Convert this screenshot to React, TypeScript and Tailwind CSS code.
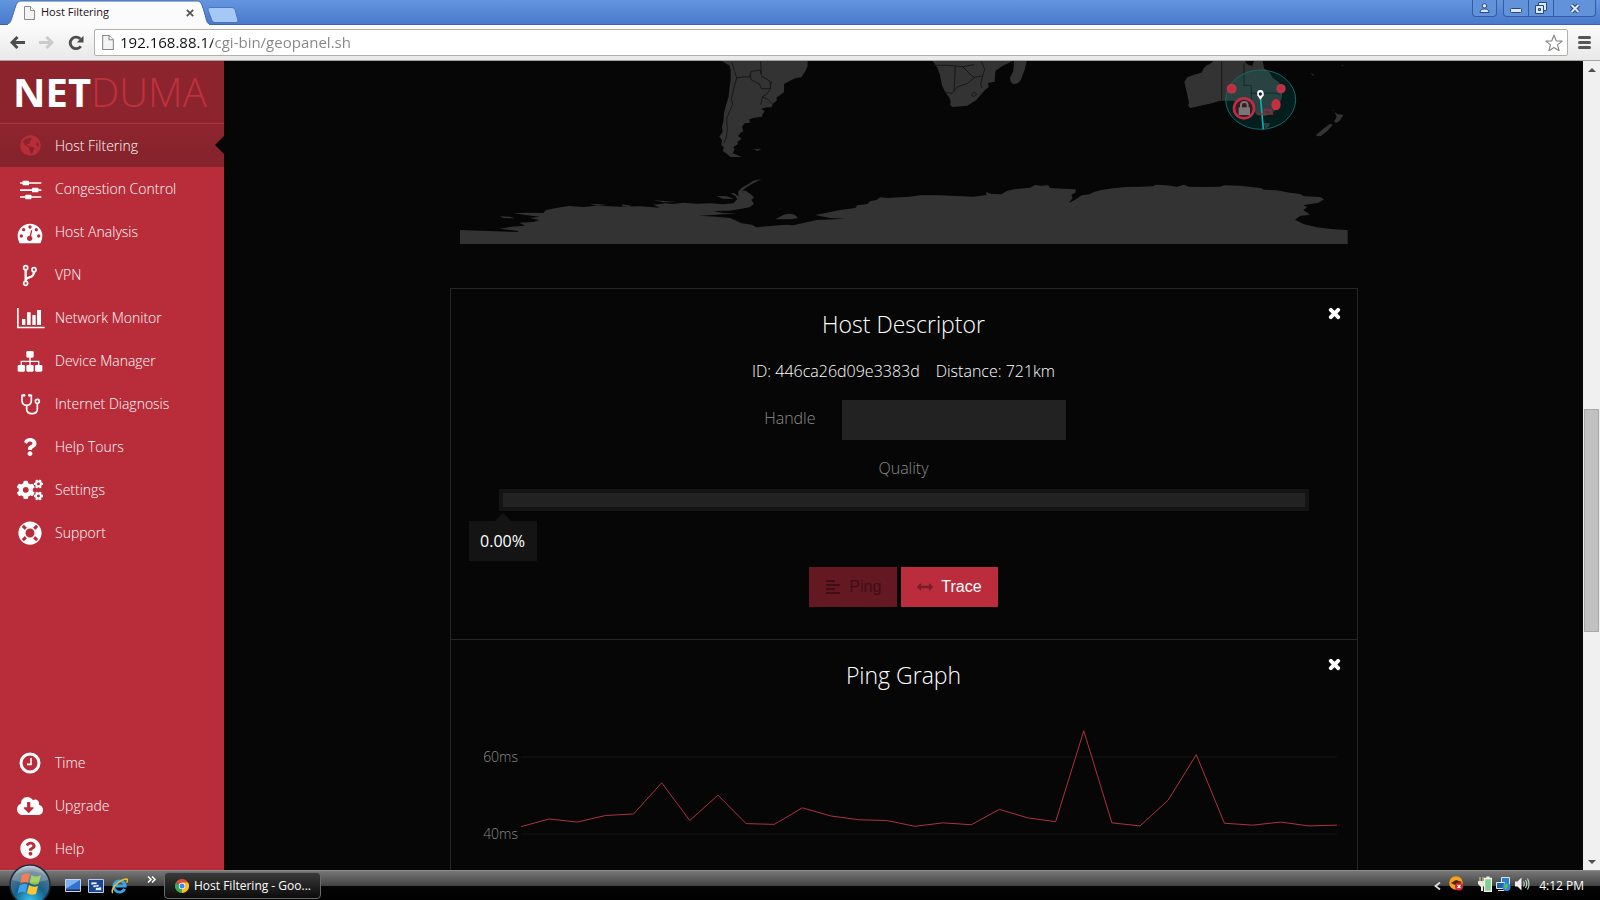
import React, { useState } from 'react';
import { FaAlignLeft, FaArrowsAltH, FaCloudDownloadAlt, FaCogs, FaGlobeAmericas, FaLifeRing, FaQuestion, FaQuestionCircle, FaTimes } from 'react-icons/fa';

const PINGS = [
  41.9, 43.9, 43.1, 44.8, 45.2, 53.3, 43.5, 50.1, 42.7, 42.5,
  46.8, 44.7, 43.7, 43.5, 42, 42.9, 42.4, 46.4, 44.2, 43.2,
  66.8, 42.9, 42.1, 48.8, 60.6, 42.8, 42.3, 43.1, 42.1, 42.3,
];

// All hand-drawn menu icons share one 28x26 box
const Glyph = ({ children }: { children: React.ReactNode }) => (
  <svg viewBox="0 0 84 78" className="h-[26px] w-7 overflow-visible" fill="currentColor" aria-hidden="true">{children}</svg>
);

const SlidersIcon = () => (
  <Glyph>
    <path d="M12 19h64v4H12zM12 40h64v5H12zM12 61h64v4H12z" />
    <rect x="20" y="14" width="19" height="14" rx="2" />
    <rect x="48" y="35" width="19" height="14" rx="2" />
    <rect x="28" y="56" width="18" height="14" rx="2" />
  </Glyph>
);

const DashboardIcon = () => (
  <Glyph>
    <path d="M5 51a37 37 0 0 1 74 0q0 11-5 20-1 2-3 2H13q-2 0-3-2-5-9-5-20Z" />
    <g fill="#b92d3a">
      <circle cx="16" cy="51" r="5" /><circle cx="23" cy="32" r="5" /><circle cx="42" cy="24" r="5" />
      <circle cx="61" cy="32" r="5" /><circle cx="68" cy="51" r="5" /><circle cx="41" cy="58" r="8" />
    </g>
    <path d="M47 34l-5 22" stroke="#b92d3a" strokeWidth="4" />
  </Glyph>
);

const ForkIcon = () => (
  <Glyph>
    <g fill="none" stroke="currentColor" strokeWidth="5">
      <circle cx="29" cy="17" r="6" /><circle cx="29" cy="64" r="6" /><circle cx="54" cy="23" r="6" />
      <path strokeWidth="7" d="M29 23v35M54 29c0 13-8 15-16 18-6 2-9 4-9 9" />
    </g>
  </Glyph>
);

const ChartIcon = () => (
  <Glyph>
    <path d="M3 9h5v56h78v5H3zM18 42h10v18H18zM33 22h11v38H33zM49 30h10v30H49zM63 15h12v45H63z" />
  </Glyph>
);

const SitemapIcon = () => (
  <Glyph>
    <rect x="31" y="9" width="22" height="20" rx="4" />
    <rect x="5" y="51" width="22" height="20" rx="4" />
    <rect x="31" y="51" width="22" height="20" rx="4" />
    <rect x="57" y="51" width="22" height="20" rx="4" />
    <path d="M42 28v24M16 52V40h52v12" fill="none" stroke="currentColor" strokeWidth="4" />
  </Glyph>
);

const StethoscopeIcon = () => (
  <Glyph>
    <g fill="none" stroke="currentColor" strokeWidth="5">
      <path d="M25 13h-7v15c0 9 5 15 14 15s14-6 14-15V13h-7" />
      <path d="M32 43v11c0 9 6 14 16 14s16-5 16-14V37" />
      <circle cx="64" cy="31" r="6" />
    </g>
    <circle cx="24" cy="13" r="4" /><circle cx="40" cy="13" r="4" />
  </Glyph>
);

const ClockIcon = () => (
  <Glyph>
    <g fill="none" stroke="currentColor">
      <circle cx="42" cy="39" r="27" strokeWidth="9" />
      <path d="M45 24v19H33" strokeWidth="5" />
    </g>
  </Glyph>
);

const MENU = [
  { label: 'Host Filtering', icon: <FaGlobeAmericas size={21} /> },
  { label: 'Congestion Control', icon: <SlidersIcon /> },
  { label: 'Host Analysis', icon: <DashboardIcon /> },
  { label: 'VPN', icon: <ForkIcon /> },
  { label: 'Network Monitor', icon: <ChartIcon /> },
  { label: 'Device Manager', icon: <SitemapIcon /> },
  { label: 'Internet Diagnosis', icon: <StethoscopeIcon /> },
  { label: 'Help Tours', icon: <FaQuestion size={18} /> },
  { label: 'Settings', icon: <FaCogs size={26} /> },
  { label: 'Support', icon: <FaLifeRing size={24} /> },
];

const FOOTER_MENU = [
  { label: 'Time', icon: <ClockIcon /> },
  { label: 'Upgrade', icon: <FaCloudDownloadAlt size={26} /> },
  { label: 'Help', icon: <FaQuestionCircle size={21} /> },
];

function PageIcon({ className }: { className: string }) {
  return (
    <svg viewBox="0 0 11 14" className={className} aria-hidden="true">
      <path d="M.5.5h6l4 4v9H.5z" fill="#f4f4f4" stroke="#8a8a8a" />
      <path d="M6.500.5v4h4" fill="#fff" stroke="#8a8a8a" />
    </svg>
  );
}

function MenuItem({ label, icon, active }: { label: string; icon: React.ReactNode; active?: boolean }) {
  return (
    <li className={active ? "relative bg-linear-to-b from-[#8f252e] to-[#84222b]" : ""}>
      <a href="#" className="flex h-[43px] items-center gap-[11px] pl-4 text-sm font-light text-white">
        <span className={`flex w-7 justify-center ${active ? "text-[#b92d3a]" : ""}`}>{icon}</span>
        {label}
      </a>
      {active && (
        <svg viewBox="0 0 9 18" className="absolute right-0 top-3 h-[18px] w-[9px]" aria-hidden="true">
          <path d="M9 0v18L0 9z" fill="#060606" />
        </svg>
      )}
    </li>
  );
}

function BrowserChrome() {
  return (
    <header className="shrink-0">
      <div className="flex h-[25px] items-start justify-between border-b border-[#3c63ad] bg-linear-to-b from-[#6496df] to-[#4a79cd] pl-1.5">
        <div className="flex">
          <div className="relative h-[25px] w-[205px]">
            <svg viewBox="0 0 205 25" className="absolute inset-0 h-full w-full" aria-hidden="true">
              <path d="M0 25C5 24 5 20 9 8c2-6 3-7 7-7h174c4 0 5 1 7 7 4 12 3 16 8 17z" fill="#fbfbfb" stroke="#3f67b0" />
              <path d="M2 24h201v1H2z" fill="#fbfbfb" />
            </svg>
            <div className="relative flex h-[25px] items-center pl-[18px] pr-4">
              <PageIcon className="h-[14px] w-[11px]" />
              <span className="ml-[6px] flex-1 text-[11px] text-[#1c1020]">Host Filtering</span>
              <button aria-label="Close tab" className="p-px text-[#555]">
                <svg viewBox="0 0 8 8" className="h-2 w-2" stroke="currentColor" strokeWidth="1.800"><path d="M.8.8l6.400 6.400M7.200.8L.8 7.200" /></svg>
              </button>
            </div>
          </div>
          <button aria-label="New tab" className="-ml-1 mt-[5px]">
            <svg viewBox="0 0 32 16" className="h-4 w-8"><path d="M3 .5h22q2 0 3 2l3 11q0 2-2 2H8q-2 0-3-2L1 3Q.500.5 3 .5z" fill="#a6c8f6" stroke="#4a76bf" /></svg>
          </button>
        </div>
        <div className="flex gap-1.5 pr-1">
          <button aria-label="User" className="flex h-[17px] w-[25px] items-center justify-center rounded-b border border-t-0 border-[#355c9f] bg-[#6292da]">
            <svg viewBox="0 0 11 10" className="h-[10px] w-[11px]" fill="#dce9fa" stroke="#27477f"><circle cx="5.500" cy="2.800" r="2.200" /><path d="M1 9.500q0-3.500 4.500-3.500T10 9.500z" /></svg>
          </button>
          <div className="flex h-[17px] divide-x divide-[#355c9f] overflow-hidden rounded-b border border-t-0 border-[#355c9f] bg-[#6292da]">
            <button aria-label="Minimize" className="flex w-[25px] items-center justify-center pt-1">
              <svg viewBox="0 0 12 5" className="h-[5px] w-3"><rect x=".5" y=".5" width="11" height="4" rx="1" fill="#dce9fa" stroke="#27477f" /></svg>
            </button>
            <button aria-label="Restore" className="flex w-[25px] items-center justify-center">
              <svg viewBox="0 0 12 12" className="h-3 w-3" fill="#dce9fa" stroke="#27477f"><path d="M3.500.5h8v8h-8z" /><path d="M.5 3.500h8v8h-8z" /><path d="M3.500 6.500h2v2h-2z" fill="#6292da" /></svg>
            </button>
            <button aria-label="Close" className="flex w-[41px] items-center justify-center">
              <svg viewBox="0 0 12 11" className="h-[11px] w-3"><path d="M2.500 2l7 7M9.500 2l-7 7" stroke="#27477f" strokeWidth="4" /><path d="M2.500 2l7 7M9.500 2l-7 7" stroke="#dce9fa" strokeWidth="2" /></svg>
            </button>
          </div>
        </div>
      </div>
      <div className="flex h-9 items-center border-b border-[#a3a3a3] bg-linear-to-b from-[#fbfbfb] to-[#e9e9e9] pl-2.5 pr-[9px]">
        <button aria-label="Back" className="text-[#4d4d4d]">
          <svg viewBox="0 0 15 13" className="h-[13px] w-[15px]" fill="none" stroke="currentColor" strokeWidth="3"><path d="M15 6.500H2.500M7.500 1L2 6.500 7.500 12" /></svg>
        </button>
        <button aria-label="Forward" className="ml-[14px] text-[#cbcbcb]">
          <svg viewBox="0 0 15 13" className="h-[13px] w-[15px]" fill="none" stroke="currentColor" strokeWidth="3"><path d="M0 6.500h12.500M7.500 1L13 6.500 7.500 12" /></svg>
        </button>
        <button aria-label="Reload" className="ml-[14px] text-[#4d4d4d]">
          <svg viewBox="0 0 16 16" className="h-4 w-4"><path d="M12.800 11.200A5.800 5.800 0 1 1 12.300 4" fill="none" stroke="currentColor" strokeWidth="2.800" /><path d="M15.500.8v6.700H8.800z" fill="currentColor" /></svg>
        </button>
        <div className="ml-2.5 flex h-[27px] flex-1 items-center rounded-xs border border-[#b4b0a8] bg-white pl-[7px] pr-1">
          <PageIcon className="h-[15px] w-3" />
          <input
            type="text"
            aria-label="Address"
            defaultValue="192.168.88.1/cgi-bin/geopanel.sh"
            className="ml-1.5 flex-1 bg-[linear-gradient(90deg,#111_93px,#858585_93px)] bg-clip-text text-[15px] text-transparent outline-none"
          />
          <button aria-label="Bookmark">
            <svg viewBox="0 0 18 18" className="h-[18px] w-[18px]"><path d="M9 1.200l2.200 5.600 6 .300-4.700 3.800 1.600 5.800L9 13.400l-5.100 3.300 1.600-5.800L.8 7.100l6-.3z" fill="#fff" stroke="#8a8a8a" strokeWidth="1.200" strokeLinejoin="round" /></svg>
          </button>
        </div>
        <button aria-label="Menu" className="ml-2.5 flex w-[13px] flex-col gap-0.5">
          <span className="h-[3px] rounded-sm bg-[#555]" />
          <span className="h-[3px] rounded-sm bg-[#555]" />
          <span className="h-[3px] rounded-sm bg-[#555]" />
        </button>
      </div>
    </header>
  );
}

function Sidebar() {
  return (
    <nav className="flex w-56 shrink-0 flex-col justify-between bg-[#b92d3a]">
      <div>
        <div className="flex h-[63px] items-center border-b border-[#a83540] bg-[#8b242d] pl-[13px] text-[40px] leading-none text-white">
          <span className="font-bold">NET</span>
          <span className="font-light text-[#c0313f]">DUMA</span>
        </div>
        <ul>
          {MENU.map((item, i) => <MenuItem key={item.label} {...item} active={i === 0} />)}
        </ul>
      </div>
      <ul>
        {FOOTER_MENU.map(item => <MenuItem key={item.label} {...item} />)}
      </ul>
    </nav>
  );
}

function WorldMap() {
  return (
    <svg viewBox="60 3 2664 549" className="mx-auto block w-full max-w-[888px]" role="img" aria-label="Host map">
      <g fill="#333">
        {/* South America */}
        <path d="M846 3L860 12L868 16L872 30L872 60L868 85L866 110L858 135L852 160L850 185L846 200L848 215L838 230L846 240L844 256L852 262L848 272L858 280L872 291L905 291L890 284L878 280L884 268L880 262L894 252L892 246L905 236L894 228L902 218L910 214L906 200L914 190L930 188L928 178L940 174L966 170L968 162L974 154L964 146L980 142L994 142L1000 130L1010 122L1010 112L1022 104L1032 96L1032 72L1050 62L1068 54L1084 52L1096 34L1103 18L1103 3Z" />
        {/* Antarctica */}
        <path d="M60 510L120 512L232 516L235 513L180 506L215 500L255 497L238 488L280 486L298 480L270 474L300 470L262 466L220 460L262 458L310 459L318 450L345 445L385 438L430 441L470 437L540 440L600 439L660 443L640 434L676 430L700 432L730 428L770 431L810 430L850 433L880 430L892 418L886 408L870 400L884 400L896 410L894 396L904 384L925 372L940 362L965 357L940 370L922 380L906 392L918 392L934 404L942 412L934 420L942 432L928 442L905 446L868 452L820 453L850 459L890 460L830 464L775 467L830 470L870 474L905 490L935 494L950 502L1000 497L1040 494L1060 496L1090 489L1130 480L1215 476L1170 474L1125 465L1160 458L1200 450L1246 444L1252 436L1282 432L1290 424L1310 420L1320 412L1345 414L1380 412L1410 410L1440 406L1500 406L1550 408L1600 410L1640 405L1638 396L1655 402L1684 403L1700 393L1725 387L1770 383L1785 375L1802 377L1825 376L1830 384L1870 386L1908 388L1906 398L1894 404L1898 414L1886 429L1904 420L1925 406L1948 403L1962 396L1984 390L2020 385L2060 381L2100 380L2140 379L2146 374L2180 376L2210 380L2232 374L2246 380L2290 381L2340 380L2352 376L2400 377L2440 382L2462 384L2472 389L2510 391L2550 398L2580 402L2592 409L2640 411L2652 418L2636 428L2590 436L2602 442L2590 450L2610 464L2580 468L2565 479L2590 492L2630 502L2680 508L2723 510L2723 552L60 552Z" />
        <path d="M1006 478l22-12q16-8 36-2l10 10-20 4zM180 469l30 1 14 5-34-1zM942 267l22 1-12 5zM450 431l30 2 22 2-30 2zM830 408l30 1 22 8-34-1zM640 420l40 4 30 2-40 1zM545 433l30 4-8 4-18-2z" />
        {/* Africa */}
        <path d="M1478 3l14 20 8 22 6 32 12 22 10 14 4 12-2 10 8 6 44-4 26-16 26-30 12-10-2-12 20-4 2-32 20-14 20-10 12-6zM1722 3h38l-6 26-12 32-8 9-14 3-8-8-2-12 10-20z" />
        {/* Australia and New Zealand */}
        <path d="M2233 65L2242 52L2262 44L2284 38L2292 24L2300 16L2310 12L2320 3L2416 3L2420 12L2436 18L2442 3L2468 3L2472 25L2490 38L2498 54L2516 66L2526 85L2526 110L2516 140L2498 158L2476 168L2450 165L2442 150L2426 140L2410 132L2398 124L2372 122L2340 122L2316 130L2288 136L2266 141L2250 144L2244 136L2247 128L2240 95Z" />
        <path d="M2470 190l20-1-4 12-10 4zM2628 225l24-20 18-14 8 4-16 18-20 16-12-1zM2682 184l8-12-6-16 8 6 18 4-12 18-10 5zM2610 38l14 7-4 2zM2704 15h6l-2 4zM2676 148l6 4-2 2z" />
      </g>
      <g fill="none" stroke="#171717" strokeWidth="3" strokeLinejoin="round">
        <path d="M876 8l8 26 6 20-6 22-10 40 4 18-10 22-8 20 2 34-4 24-6 16M890 54l26-4 12 2 6-18 26-4 4 14-2-40M930 44l4 16 24 12 6 14h26l4-20-30-18M990 66l2 20-12 16-12 8-6 24M966 110l18 8 16 18" />
        <path d="M1480 16h40l26 2 22 2 34-6M1546 20l-4 74-6 6-22-4M1568 20l24 24 12 8-22 18-32 12-8 12M1604 52l24-4 6-20-10-24M1628 48l-6 24 4 12M1594 104l8-8 8 6-8 8z" />
        <path d="M2345 3v118M2412 10v70M2412 76h22v74M2434 100l66-1 20 4" />
      </g>
      <ellipse cx="2462" cy="119" rx="105" ry="89" fill="#008c8c" fillOpacity=".18" stroke="#16686a" strokeWidth="3" />
      <path d="M2462 118l8 90" stroke="#18a9ae" strokeWidth="5" />
      <g fill="#b3374a">
        <circle cx="2375" cy="86" r="15" /><circle cx="2523" cy="86" r="14" /><ellipse cx="2508" cy="134" rx="14" ry="17" fill="#c5303f" />
      </g>
      <g fill="#d71e35"><circle cx="2375" cy="86" r="6" /><circle cx="2523" cy="86" r="5" /></g>
      <circle cx="2412" cy="145" r="30" fill="#421820" stroke="#b92f45" strokeWidth="8" />
      <path d="M2396 142h34v23h-34z" fill="#777" />
      <path d="M2403 144v-8q0-10 10-10t10 10v8" fill="none" stroke="#777" strokeWidth="6" />
      <path d="M2455 162h18v-12h20v14M2470 162h30M2474 145l24 14" fill="none" stroke="#8b2b3a" strokeWidth="4" />
      <path d="M2461 120l-9-14q-3-16 9-16t10 16z" fill="#fff" />
      <circle cx="2461" cy="102" r="5" fill="#123" />
    </svg>
  );
}

function PanelHeader({ title }: { title: string }) {
  return (
    <div className="relative pt-[17px]">
      <h2 className="text-center text-[23px] font-light leading-9 text-white">{title}</h2>
      <button aria-label={`Close ${title}`} className="absolute right-[15px] top-[17px] text-white"><FaTimes size={15} strokeWidth={40} stroke="currentColor" /></button>
    </div>
  );
}

function PingGraph() {
  const y = (ms: number) => 124 - (ms - 40) * 3.85;
  const points = PINGS.map((ms, i) => `${70 + (i * 816) / (PINGS.length - 1)},${y(ms)}`).join(' ');

  return (
    <svg viewBox="0 0 906 200" className="block w-full" role="img" aria-label="Ping graph">
      {[60, 40].map(ms => (
        <g key={ms}>
          <path d={`M70 ${y(ms)}H886`} stroke="#151515" />
          <text x="67" y={y(ms) + 5} textAnchor="end" className="fill-[#8b8b8b] text-[14px] font-light">{ms}ms</text>
        </g>
      ))}
      <polyline points={points} fill="none" stroke="#b03040" strokeWidth="1" />
    </svg>
  );
}

function HostDescriptor() {
  const [handle, setHandle] = useState("");

  return (
    <section className="border border-[#262626] pb-8">
      <PanelHeader title="Host Descriptor" />
      <p className="mt-[17px] flex justify-center gap-4 text-base font-light leading-6 text-white">
        <span>ID: 446ca26d09e3383d</span>
        <span>Distance: 721km</span>
      </p>
      <div className="mt-[17px] flex justify-center">
        <label htmlFor="handle" className="w-[100px] pr-[26px] pt-1.5 text-right font-light text-[#8b8b8b]">Handle</label>
        <input id="handle" type="text" value={handle} onChange={e => setHandle(e.target.value)} className="h-10 w-56 bg-[#222] px-3 text-white outline-none" />
      </div>
      <div id="quality-label" className="mt-4 text-center font-light leading-6 text-[#8b8b8b]">Quality</div>
      <div className="relative mx-12 mt-[9px]">
        <div role="meter" aria-labelledby="quality-label" aria-valuenow={0} aria-valuemin={0} aria-valuemax={100} className="h-[22px] border-4 border-[#141414] bg-[#222]" />
        <div className="absolute -left-[30px] top-8 flex h-10 w-[68px] items-center justify-center bg-[#141414] text-base text-white">
          0.00%
          <svg viewBox="0 0 16 8" className="absolute -top-2 h-2 w-4" aria-hidden="true"><path d="M8 0l8 8H0z" fill="#141414" /></svg>
        </div>
      </div>
      <div className="mt-14 flex justify-center gap-1 font-['Liberation_Sans',Arial,sans-serif] text-base">
        <button disabled className="flex h-10 items-center gap-2 bg-[#641822] px-4 text-[#3e0f17]"><FaAlignLeft />Ping</button>
        <button className="flex h-10 items-center gap-2 bg-[#bb2d3c] px-4 text-white"><FaArrowsAltH className="text-[#7c1c28]" />Trace</button>
      </div>
    </section>
  );
}

function Scrollbar() {
  return (
    <div className="flex w-[17px] shrink-0 flex-col bg-[#f0f0f0] px-px" aria-hidden="true">
      <div className="flex h-[17px] items-center justify-center"><svg viewBox="0 0 8 4" className="h-1 w-2"><path d="M4 0l4 4H0z" fill="#505050" /></svg></div>
      <div className="grow-3 basis-0" />
      <div className="grow-2 basis-0 border border-[#a8a8a8] bg-[#c1c1c1]" />
      <div className="grow-2 basis-0" />
      <div className="flex h-[17px] items-center justify-center"><svg viewBox="0 0 8 4" className="h-1 w-2"><path d="M4 4l4-4H0z" fill="#505050" /></svg></div>
    </div>
  );
}

function StartOrb() {
  return (
    <svg viewBox="0 0 42 42" className="absolute -top-[7px] left-0 h-[42px] w-[42px]" aria-hidden="true">
      <defs>
        <radialGradient id="orb" cx=".5" cy=".9" r=".9">
          <stop offset="0" stopColor="#35c6ee" /><stop offset=".45" stopColor="#16618f" /><stop offset=".8" stopColor="#57748a" /><stop offset="1" stopColor="#c3d3dc" />
        </radialGradient>
      </defs>
      <circle cx="21" cy="21" r="20" fill="url(#orb)" stroke="#1c2c38" strokeWidth="1.500" />
      <path d="M13 11q4-3 8-1l-2 9q-4-2-8 1z" fill="#ee5a24" />
      <path d="M22.500 11q4 3 9.500 0l-2.500 9q-5 2-9-1z" fill="#8cc63e" />
      <path d="M10.500 21.500q4-3 8-1l-2 8q-4-2-8 1z" fill="#3fa0e8" />
      <path d="M20 21q4 3 9 1l-2 8q-5 2-9-1z" fill="#fdc82f" />
      <path d="M3 16a18.500 18.500 0 0 1 36 0q-18 5-36 0z" fill="#fff" fillOpacity=".22" />
    </svg>
  );
}

function Taskbar() {
  return (
    <footer className="flex h-[30px] shrink-0 items-center border-t border-[#8c8c8c] bg-[linear-gradient(#777_0,#444_50%,#050505_50%,#000_100%)] text-white">
      <button aria-label="Start" className="relative ml-[9px] h-[30px] w-[42px] self-start"><StartOrb /></button>
      <div className="ml-[14px] flex items-center gap-[7px]">
        <button aria-label="Show desktop">
          <svg viewBox="0 0 16 14" className="h-[14px] w-4"><path d="M.5.5h15v12H.5z" fill="#3470d0" stroke="#c8d4e4" /><path d="M1 1h14L2 9H1z" fill="#7fb0f0" /><path d="M1 10.500h14V12H1z" fill="#1c2a44" /></svg>
        </button>
        <button aria-label="Switch windows">
          <svg viewBox="0 0 16 14" className="h-[14px] w-4"><path d="M.5.5h15v13H.5z" fill="#1c4590" stroke="#b8cce8" /><path d="M3 3h6v3H3zM5 5.500h6v3H5zM7.500 8h6v3.500h-6z" fill="#e8f2ff" stroke="#1c4590" strokeWidth=".7" /></svg>
        </button>
        <button aria-label="Internet Explorer">
          <svg viewBox="0 0 18 18" className="h-[18px] w-[17px]" fill="none"><path d="M14.500 12A6 6 0 1 1 15 9H5" stroke="#3aa5ec" strokeWidth="3" /><path d="M2 16.500C-1 13 8 2 16.500 1.500c1.500.5 1 2.500 0 4" stroke="#f3c21d" strokeWidth="1.600" /></svg>
        </button>
      </div>
      <button aria-label="More" className="mb-3 ml-[19px]">
        <svg viewBox="0 0 9 7" className="h-[7px] w-[9px]" fill="none" stroke="#fff" strokeWidth="1.500"><path d="M1 .5l3 3-3 3M5 .5l3 3-3 3" /></svg>
      </button>
      <button className="ml-2 flex h-[27px] w-[157px] items-center gap-[5px] rounded-sm border border-[#6a6a6a] bg-linear-to-b from-[#3a3a3a] to-[#0c0c0c] pl-2.5 text-xs">
        <svg viewBox="0 0 14 14" className="h-[14px] w-[14px]" aria-hidden="true">
          <path d="M7 7L.9 3.500A7 7 0 0 1 13.100 3.500z" fill="#e04a3a" />
          <path d="M7 7L.9 3.500A7 7 0 0 0 7 14z" fill="#3aa757" />
          <path d="M7 7h0V14A7 7 0 0 0 13.100 3.500H7z" fill="#fbc116" />
          <circle cx="7" cy="7" r="3.200" fill="#fff" /><circle cx="7" cy="7" r="2.500" fill="#4285f4" />
        </svg>
        Host Filtering - Goo...
      </button>
      <div className="ml-auto flex items-center pr-4">
        <button aria-label="Show hidden icons">
          <svg viewBox="0 0 7 8" className="h-2 w-[7px]" fill="none" stroke="#ddd" strokeWidth="1.800"><path d="M6 .5L1.500 4 6 7.500" /></svg>
        </button>
        <svg viewBox="0 0 15 15" className="mb-1 ml-2 h-[15px] w-[15px]" aria-hidden="true"><circle cx="7" cy="7" r="6.800" fill="#f5a21a" /><path d="M2 7l5-3 6 2-4 2-3 1z" fill="#4a2508" /><circle cx="10" cy="10.500" r="4" fill="#d8242b" /><path d="M8.500 9l3 3M11.500 9l-3 3" stroke="#fff" strokeWidth="1.200" /></svg>
        <div className="mb-1 ml-3.5 flex items-center gap-1">
          <svg viewBox="0 0 14 16" className="h-4 w-[14px]" aria-hidden="true"><path d="M6.500 2.500h7v13h-7z" fill="#7fd08f" stroke="#f4f4f4" strokeWidth="1.300" /><path d="M8.500.5h3v2h-3z" fill="#f4f4f4" /><path d="M2 1v4M5 1v4" stroke="#d8c87a" strokeWidth="1.200" /><path d="M0 5h7v3L5 11v4H3v-4L0 8z" fill="#e9e9dc" /></svg>
          <svg viewBox="0 0 15 16" className="h-4 w-[15px]" aria-hidden="true"><path d="M5.500 1.500h8v7h-8z" fill="#2a7fd0" stroke="#dbe9f5" /><path d="M.5 6.500h8v6h-8z" fill="#1e62b0" stroke="#dbe9f5" /><path d="M2 14.500h6" stroke="#dbe9f5" /><circle cx="10.500" cy="11" r="4" fill="#2a8fe0" /><path d="M8 9q3-2 4 0l-1 3-2 2z" fill="#57c04f" /></svg>
          <svg viewBox="0 0 15 14" className="h-[14px] w-[15px]" aria-hidden="true"><path d="M0 4.500h2.500L6.500.5v13l-4-4H0z" fill="#eee" /><path d="M8.500 4.500q1.500 2.500 0 5M10.500 3q2.500 4 0 8M12.500 1.500q3 5.500 0 11" fill="none" stroke="#b8e0c0" strokeWidth="1.100" /></svg>
        </div>
        <span className="ml-[9px] text-xs">4:12 PM</span>
      </div>
    </footer>
  );
}

export default function App() {
  return (
    <div className="flex h-screen flex-col overflow-hidden bg-[#060606] font-['Open_Sans','Noto_Sans',sans-serif]">
      <BrowserChrome />
      <div className="flex min-h-0 flex-1">
        <Sidebar />
        <main className="min-w-0 flex-1 overflow-hidden">
          <WorldMap />
          <div className="mx-auto mt-11 w-full max-w-[908px]">
            <HostDescriptor />
            <section className="border-x border-[#262626]">
              <PanelHeader title="Ping Graph" />
              <div className="pt-[17px]">
                <PingGraph />
              </div>
            </section>
          </div>
        </main>
        <Scrollbar />
      </div>
      <Taskbar />
    </div>
  );
}
